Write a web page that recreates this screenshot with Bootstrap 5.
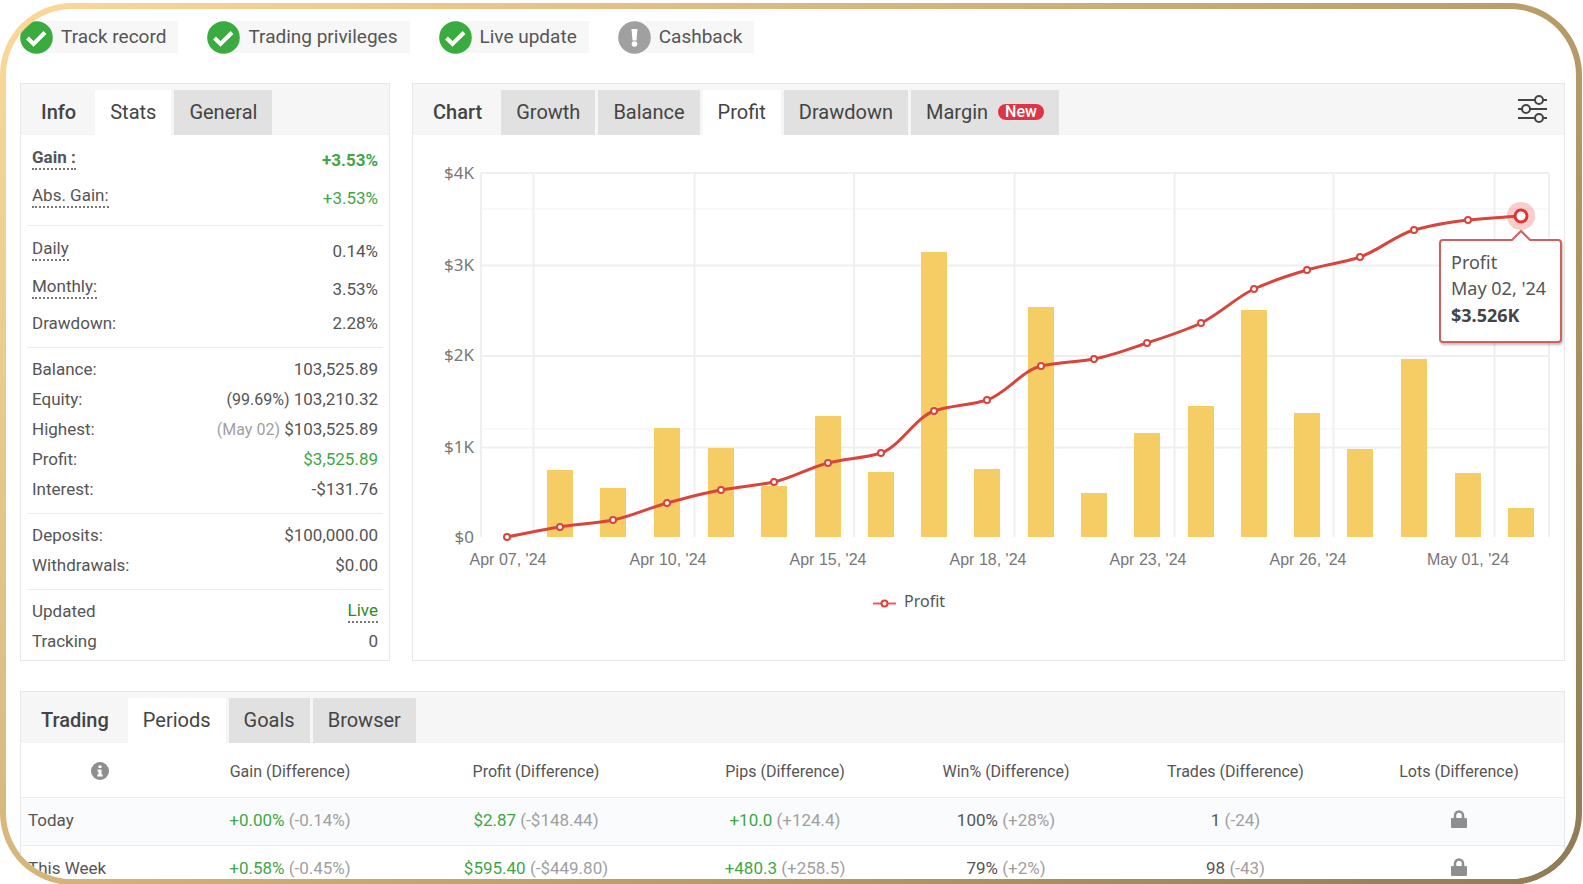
<!DOCTYPE html>
<html lang="en">
<head>
<meta charset="utf-8">
<meta name="viewport" content="width=device-width, initial-scale=1">
<title>Account statistics</title>
<link href="https://cdn.jsdelivr.net/npm/bootstrap@5.3.0/dist/css/bootstrap.min.css" rel="stylesheet">
<style>
  body { font-family: Roboto, "Liberation Sans", sans-serif; font-size: 17px; line-height: 30px; color: #555; background: #fff; height: 100vh; overflow: hidden; padding: 3px 1px 0 0; }
  .frame { height: calc(100vh - 2px); padding: 6px; border-radius: 72px; background: linear-gradient(135deg, #fcd999 0%, #c6a96f 50%, #8f7b55 100%); }
  .screen { height: 100%; border-radius: 66px; overflow: hidden; background: #fff; padding: 12px 11px 0 14px; }

  .status-row { gap: 29px; margin-bottom: 30px; }
  .status { height: 32px; font-size: 19px; background: linear-gradient(#f7f7f7, #f7f7f7) 17px 0 no-repeat; padding-right: 12px; gap: 8px; }
  .status svg { width: 33px; height: 33px; flex: none; }

  .panels { gap: 22px; margin-bottom: 30px; }
  .panel { border: 1px solid #e8e8e8; background: #fff; }
  .panel-side { flex: 0 0 370px; }
  .panel-head { background: #f6f6f6; height: 51px; padding: 6px 16px 0 20px; font-size: 20px; color: #444; gap: 3px; }
  .panel-title { font-size: 20px; font-weight: 500; line-height: 44px; margin: 0 16px 0 0; }
  .tab-btn { border: 0; background: #e1e1e1; color: #444; height: 45px; line-height: 42px; padding: 0 15px 2px; }
  .tab-btn.active { background: #fff; }
  .tag-new { font-size: 16px; font-weight: 500; line-height: 16px; color: #fff; background: #dc3545; border-radius: 8px; padding: 0 7px; margin-left: 10px; }
  .tool-btn { border: 0; background: none; padding: 0; line-height: 0; margin-top: 5px; }

  .stat-group { margin: 0 6px; padding: 6px 5px 9px; border-bottom: 1px solid #ececec; }
  .stat-group:first-of-type { padding-bottom: 8px; }
  .stat-group:last-child { border-bottom: 0; padding-bottom: 4px; }
  .stat-group > div { height: 30px; }
  .stat-group > .tall { height: 38px; }
  .hint { line-height: 21px; border-bottom: 2px dotted #777; margin-bottom: 4px; }
  .pos { color: #3fa646; }
  .diff { color: #a0a0a0; }
  .aside { font-size: 16px; }
  .live { color: #2f8a2b; line-height: 22px; border-bottom: 2px dotted #777; text-decoration: none; }

  .chart { display: block; width: 100%; height: auto; }
  .chart .axis-x { font: 16px "Liberation Sans", sans-serif; fill: #777; text-anchor: middle; }
  .chart .axis-y { font: 17px "Noto Sans", sans-serif; fill: #777; text-anchor: end; }
  .chart .legend-label { font: 16px "Noto Sans", sans-serif; fill: #555; }
  .chart .note { font: 18px "Noto Sans", sans-serif; fill: #555; }
  .chart .note-strong { font-weight: 700; fill: #444; }

  .periods { table-layout: fixed; width: 100%; text-align: center; line-height: 20px; }
  .periods th { font-size: 16px; font-weight: 400; height: 54px; padding: 5px 0 0; }
  .periods td { height: 48px; padding: 0 0 3px; border-top: 1px solid #e9edf0; }
  .periods tbody th { text-align: left; font-size: 17px; padding: 0 0 3px 7px; height: 48px; border-top: 1px solid #e9edf0; }
  .periods tr > :last-child { padding-right: 4px; }
  .periods .shade > * { background: #f9fbfd; }
  .periods svg { display: inline-block; vertical-align: -2px; }
</style>
</head>
<body>
<svg width="0" height="0" class="position-absolute" aria-hidden="true">
  <symbol id="ok" viewBox="0 0 33 33"><circle cx="16.500" cy="16.500" r="16.300" fill="#3aab3e"/><path d="M7.500 17l6 6L25 11.500" fill="none" stroke="#fff" stroke-width="4"/></symbol>
  <symbol id="warn" viewBox="0 0 33 33"><circle cx="16.500" cy="16.500" r="16.300" fill="#a0a0a0"/><path d="M13.500 8h6l-1 11.500h-4z" fill="#fff"/><circle cx="16.500" cy="23" r="2.800" fill="#fff"/></symbol>
  <symbol id="lock" viewBox="0 0 16 18"><path d="M4 9V5.500a4 4 0 0 1 8 0V9" fill="none" stroke="#8e8e8e" stroke-width="2.500"/><rect x="0" y="8" width="16" height="10" rx="1" fill="#8e8e8e"/></symbol>
</svg>

<div class="frame">
<main class="screen">
  <div class="status-row d-flex">
    <div class="status d-flex align-items-center"><svg><use href="#ok"/></svg><span>Track record</span></div>
    <div class="status d-flex align-items-center"><svg><use href="#ok"/></svg><span>Trading privileges</span></div>
    <div class="status d-flex align-items-center"><svg><use href="#ok"/></svg><span>Live update</span></div>
    <div class="status d-flex align-items-center"><svg><use href="#warn"/></svg><span>Cashback</span></div>
  </div>

  <div class="panels d-flex">
    <section class="panel panel-side">
      <header class="panel-head d-flex">
        <h2 class="panel-title">Info</h2>
        <button type="button" class="tab-btn active">Stats</button>
        <button type="button" class="tab-btn">General</button>
      </header>
      <div class="stat-group">
        <div class="tall d-flex justify-content-between align-items-center fw-bold"><span class="hint">Gain :</span><span class="pos">+3.53%</span></div>
        <div class="tall d-flex justify-content-between align-items-center"><span class="hint">Abs. Gain:</span><span class="pos">+3.53%</span></div>
      </div>
      <div class="stat-group">
        <div class="tall d-flex justify-content-between align-items-center"><span class="hint">Daily</span><span>0.14%</span></div>
        <div class="tall d-flex justify-content-between align-items-center"><span class="hint">Monthly:</span><span>3.53%</span></div>
        <div class="d-flex justify-content-between"><span>Drawdown:</span><span>2.28%</span></div>
      </div>
      <div class="stat-group">
        <div class="d-flex justify-content-between"><span>Balance:</span><span>103,525.89</span></div>
        <div class="d-flex justify-content-between"><span>Equity:</span><span><span class="aside">(99.69%)</span> 103,210.32</span></div>
        <div class="d-flex justify-content-between"><span>Highest:</span><span><span class="aside diff">(May 02)</span> $103,525.89</span></div>
        <div class="d-flex justify-content-between"><span>Profit:</span><span class="pos">$3,525.89</span></div>
        <div class="d-flex justify-content-between"><span>Interest:</span><span>-$131.76</span></div>
      </div>
      <div class="stat-group">
        <div class="d-flex justify-content-between"><span>Deposits:</span><span>$100,000.00</span></div>
        <div class="d-flex justify-content-between"><span>Withdrawals:</span><span>$0.00</span></div>
      </div>
      <div class="stat-group">
        <div class="d-flex justify-content-between align-items-center"><span>Updated</span><a class="live" href="#">Live</a></div>
        <div class="d-flex justify-content-between"><span>Tracking</span><span>0</span></div>
      </div>
    </section>

    <section class="panel flex-fill">
      <header class="panel-head d-flex align-items-start">
        <h2 class="panel-title">Chart</h2>
        <button type="button" class="tab-btn">Growth</button>
        <button type="button" class="tab-btn">Balance</button>
        <button type="button" class="tab-btn active">Profit</button>
        <button type="button" class="tab-btn">Drawdown</button>
        <button type="button" class="tab-btn d-flex align-items-center">Margin<span class="tag-new">New</span></button>
        <button type="button" class="tool-btn ms-auto" aria-label="Chart settings">
          <svg width="30" height="28" viewBox="0 0 30 28" fill="#f6f6f6" stroke="#444" stroke-width="2"><path d="M0 5h29M0 14h29M0 23h29"/><circle cx="21" cy="5" r="4"/><circle cx="8" cy="14" r="4"/><circle cx="21" cy="23" r="4"/></svg>
        </button>
      </header>
      <svg class="chart" id="profitChart" viewBox="413 135 1151 525" role="img" aria-label="Profit">
        <path d="M481 209H1549M481 429H1549" stroke="#f9f9f9" stroke-width="2"/>
        <path d="M481 173H1549M481 265.500H1549M481 356H1549M481 447.500H1549" stroke="#efefef" stroke-width="2" fill="none"/>
        <path d="M481 173V537M533.500 173V537M694.500 173V537M854 173V537M1014.500 173V537M1174.500 173V537M1333.500 173V537M1494.500 173V537M1549 173V537" stroke="#efefef" stroke-width="2" fill="none"/>
        <g class="axis-y"><text x="474" y="179">$4K</text><text x="474" y="271">$3K</text><text x="474" y="361">$2K</text><text x="474" y="453">$1K</text><text x="474" y="543">$0</text></g>
        <g class="axis-x"><text x="508" y="565">Apr 07, '24</text><text x="668" y="565">Apr 10, '24</text><text x="828" y="565">Apr 15, '24</text><text x="988" y="565">Apr 18, '24</text><text x="1148" y="565">Apr 23, '24</text><text x="1308" y="565">Apr 26, '24</text><text x="1468" y="565">May 01, '24</text></g>
        <g id="bars" fill="#f6cc64"></g>
        <path id="curve" fill="none" stroke="#d9443d" stroke-width="3"/>
        <g id="dots" fill="#fff" stroke="#d9443d" stroke-width="2"></g>
        <circle cx="1521" cy="216" r="14" fill="#e53935" fill-opacity=".25"/>
        <circle cx="1521" cy="216" r="6" fill="#fff" stroke="#e0352f" stroke-width="3"/>
        <path d="M873 603.500h23" stroke="#e8605a" stroke-width="2"/><circle cx="884.500" cy="603.500" r="3" fill="#fff" stroke="#d9443d" stroke-width="2"/>
        <text class="legend-label" x="904" y="607">Profit</text>
        <path d="M1443 240h69l9-9 9 9h28q3 0 3 3v96q0 3-3 3h-115q-3 0-3-3v-96q0-3 3-3z" fill="#fff" stroke="#d0605c" stroke-width="2" style="filter: drop-shadow(1px 2px 1px rgba(0,0,0,.25))"/>
        <text class="note" x="1451" y="269">Profit</text>
        <text class="note" x="1451" y="295">May 02, '24</text>
        <text class="note note-strong" x="1451" y="322">$3.526K</text>
      </svg>
    </section>
  </div>

  <section class="panel">
    <header class="panel-head d-flex">
      <h2 class="panel-title">Trading</h2>
      <button type="button" class="tab-btn active">Periods</button>
      <button type="button" class="tab-btn">Goals</button>
      <button type="button" class="tab-btn">Browser</button>
    </header>
    <table class="periods">
      <colgroup><col style="width:158px"><col style="width:222px"><col style="width:270px"><col style="width:228px"><col style="width:214px"><col style="width:245px"><col style="width:206px"></colgroup>
      <thead>
        <tr>
          <th scope="col" aria-label="Period"><svg width="18" height="18" viewBox="0 0 18 18"><circle cx="9" cy="9" r="9" fill="#8e8e8e"/><path d="M7.500 3.500h3v2.500h-3zM6.500 7.500h4V12.500h1.200V14.500H6.300V12.500h1.200V9.500h-1z" fill="#fff"/></svg></th>
          <th scope="col">Gain (Difference)</th><th scope="col">Profit (Difference)</th><th scope="col">Pips (Difference)</th><th scope="col">Win% (Difference)</th><th scope="col">Trades (Difference)</th><th scope="col">Lots (Difference)</th>
        </tr>
      </thead>
      <tbody>
        <tr class="shade">
          <th scope="row">Today</th>
          <td><span class="pos">+0.00%</span> <span class="diff">(-0.14%)</span></td>
          <td><span class="pos">$2.87</span> <span class="diff">(-$148.44)</span></td>
          <td><span class="pos">+10.0</span> <span class="diff">(+124.4)</span></td>
          <td>100% <span class="diff">(+28%)</span></td>
          <td>1 <span class="diff">(-24)</span></td>
          <td><svg width="16" height="18"><use href="#lock"/></svg></td>
        </tr>
        <tr>
          <th scope="row">This Week</th>
          <td><span class="pos">+0.58%</span> <span class="diff">(-0.45%)</span></td>
          <td><span class="pos">$595.40</span> <span class="diff">(-$449.80)</span></td>
          <td><span class="pos">+480.3</span> <span class="diff">(+258.5)</span></td>
          <td>79% <span class="diff">(+2%)</span></td>
          <td>98 <span class="diff">(-43)</span></td>
          <td><svg width="16" height="18"><use href="#lock"/></svg></td>
        </tr>
      </tbody>
    </table>
  </section>
</main>
</div>

<script src="https://cdn.jsdelivr.net/npm/bootstrap@5.3.0/dist/js/bootstrap.bundle.min.js"></script>
<script>
  // One entry per trading day: x of the day, y of the running profit, top of the day's bar
  const days = [
    [507, 537], [560, 527, 470], [613, 520, 488], [667, 503, 428], [721, 490, 448], [774, 482, 486],
    [828, 463, 416], [881, 453, 472], [934, 411, 252], [987, 400, 469], [1041, 366, 307], [1094, 359, 493],
    [1147, 343, 433], [1201, 323, 406], [1254, 289, 310], [1307, 270, 413], [1360, 257, 449],
    [1414, 230, 359], [1468, 220, 473], [1521, 216, 508]
  ];
  const baseY = 537, barW = 26;

  document.getElementById('bars').innerHTML = days.slice(1)
    .map(([x, , t]) => `<rect x="${x - barW / 2}" y="${t}" width="${barW}" height="${baseY - t}"/>`).join('');
  document.getElementById('dots').innerHTML = days.slice(0, -1)
    .map(([x, y]) => `<circle cx="${x}" cy="${y}" r="3"/>`).join('');

  // Monotone cubic through the points
  const s = days.slice(1).map((p, i) => (p[1] - days[i][1]) / (p[0] - days[i][0]));
  const m = days.map((_, i) => i === 0 ? s[0] : i === s.length ? s[i - 1] : 2 * s[i - 1] * s[i] / (s[i - 1] + s[i]));
  let d = `M${days[0][0]} ${days[0][1]}`;
  for (let i = 1; i < days.length; i++) {
    const [x0, y0] = days[i - 1], [x1, y1] = days[i], h = (x1 - x0) / 3;
    d += `C${x0 + h} ${y0 + m[i - 1] * h} ${x1 - h} ${y1 - m[i] * h} ${x1} ${y1}`;
  }
  document.getElementById('curve').setAttribute('d', d);
</script>
</body>
</html>
